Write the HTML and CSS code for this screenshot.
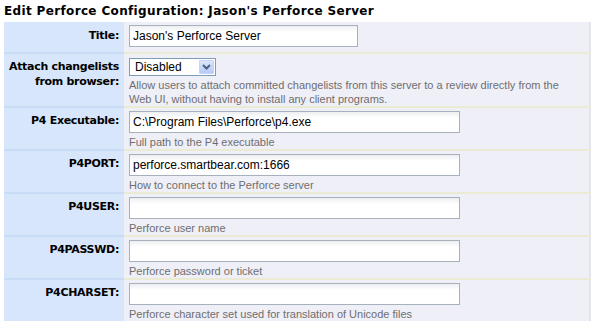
FILE: index.html
```html
<!DOCTYPE html>
<html lang="en">

<head>
    <meta charset="UTF-8">
    <title>Edit Perforce Configuration</title>
    <link rel="stylesheet" href="styles.css">
</head>

<body>
    <h1 class="heading">Edit Perforce Configuration: Jason's Perforce Server</h1>
    <table class="config">
        <tr>
            <th class="label">Title:</th>
            <td class="field">
                <input type="text" class="inp short" value="Jason's Perforce Server">
            </td>
        </tr>
        <tr>
            <th class="label">Attach changelists<br>from browser:</th>
            <td class="field">
                <div class="select">
                    <span class="select-text">Disabled</span>
                    <span class="select-btn">
                        <svg width="9" height="6" viewBox="0 0 9 6">
                            <path d="M1 1 L4.5 4.5 L8 1" fill="none" stroke="#4d6185" stroke-width="2"/>
                        </svg>
                    </span>
                </div>
                <div class="hint">Allow users to attach committed changelists from this server to a review directly from the Web UI, without having to install any client programs.</div>
            </td>
        </tr>
        <tr>
            <th class="label">P4 Executable:</th>
            <td class="field">
                <input type="text" class="inp" value="C:\Program Files\Perforce\p4.exe">
                <div class="hint">Full path to the P4 executable</div>
            </td>
        </tr>
        <tr>
            <th class="label">P4PORT:</th>
            <td class="field">
                <input type="text" class="inp" value="perforce.smartbear.com:1666">
                <div class="hint">How to connect to the Perforce server</div>
            </td>
        </tr>
        <tr>
            <th class="label">P4USER:</th>
            <td class="field">
                <input type="text" class="inp" value="">
                <div class="hint">Perforce user name</div>
            </td>
        </tr>
        <tr>
            <th class="label">P4PASSWD:</th>
            <td class="field">
                <input type="text" class="inp" value="">
                <div class="hint">Perforce password or ticket</div>
            </td>
        </tr>
        <tr>
            <th class="label">P4CHARSET:</th>
            <td class="field">
                <input type="text" class="inp" value="">
                <div class="hint">Perforce character set used for translation of Unicode files</div>
            </td>
        </tr>
    </table>
</body>

</html>
```

FILE: styles.css
```css
* {
    margin: 0;
    padding: 0;
    box-sizing: border-box;
}

body {
    background-color: white;
    padding: 2px 2px 0 4px;
    font-family: "Liberation Sans", Arial, sans-serif;
    color: black;
}

.heading {
    font-family: "DejaVu Sans", Verdana, sans-serif;
    font-size: 12px;
    font-weight: bold;
    line-height: 18px;
    height: 20px;
    letter-spacing: 0.35px;
}

.config {
    width: 587px;
    border-collapse: collapse;
    border-right: 2px solid #e4e4e8;
}

.label {
    width: 120px;
    background-color: #d8e6fb;
    border-top: 2px solid #c9dcf7;
    text-align: right;
    vertical-align: top;
    padding: 5px 5px 0 0;
    font-size: 11px;
    font-weight: bold;
    line-height: 15px;
    font-family: "DejaVu Sans", Verdana, sans-serif;
    letter-spacing: -0.3px;
}

.field {
    background-color: #efeff8;
    border-top: 2px solid #ebead3;
    vertical-align: top;
    padding: 3px 5px 0 5px;
}

.config tr:first-child .label,
.config tr:first-child .field {
    border-top: none;
    padding-top: 3px;
}

.config tr:first-child .label {
    padding-top: 6px;
}

.config tr:first-child .field {
    padding-bottom: 5px;
}

.inp {
    display: block;
    width: 331px;
    height: 22px;
    border: 1px solid #a7b0bd;
    background: linear-gradient(#eceef0, #ffffff 6px);
    font-family: "Liberation Sans", Arial, sans-serif;
    font-size: 12px;
    color: black;
    padding: 0 3px;
    outline: none;
}

.short {
    width: 229px;
}

.hint {
    margin-top: 2px;
    font-size: 11px;
    line-height: 14px;
    color: #6e6e6e;
}

.select {
    display: flex;
    width: 87px;
    height: 18px;
    border: 1px solid #7f9db9;
    background-color: white;
    padding: 1px;
    margin: 1px 0 2px 0;
}

.select-text {
    flex: 1;
    font-size: 12px;
    line-height: 14px;
    padding-left: 4px;
}

.select-btn {
    width: 15px;
    height: 14px;
    display: flex;
    align-items: center;
    justify-content: center;
    background: linear-gradient(#dbe6fe, #b6cbf7);
    border: 1px solid #c3d3fd;
    border-radius: 1px;
}
```
